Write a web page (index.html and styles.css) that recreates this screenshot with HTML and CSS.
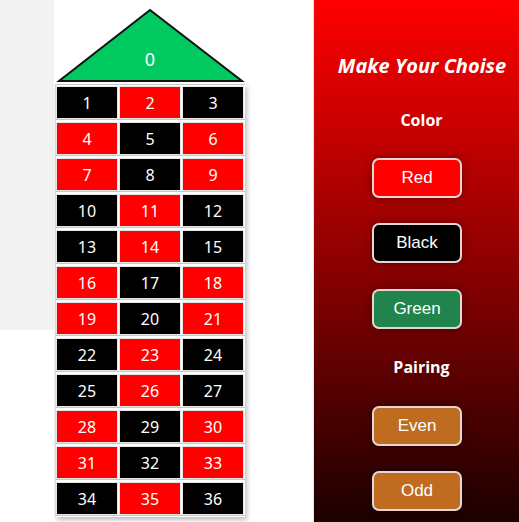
FILE: index.html
```html
<!DOCTYPE html>
<html>
<head>
<meta charset="utf-8">
<link rel="stylesheet" href="styles.css">
</head>
<body>
<div class="page">
  <div class="side"></div>
  <div class="board">
    <svg class="zero" width="190" height="74" viewBox="0 0 190 74">
      <polygon points="95,2 4,73 187,73" fill="#00c95f" stroke="#111" stroke-width="2" stroke-linejoin="miter"/>
      <text x="95" y="58" text-anchor="middle" class="zero-text">0</text>
    </svg>
    <div class="grid">
      <div class="row"><div class="cell b">1</div><div class="cell r">2</div><div class="cell b">3</div></div>
      <div class="row"><div class="cell r">4</div><div class="cell b">5</div><div class="cell r">6</div></div>
      <div class="row"><div class="cell r">7</div><div class="cell b">8</div><div class="cell r">9</div></div>
      <div class="row"><div class="cell b">10</div><div class="cell r">11</div><div class="cell b">12</div></div>
      <div class="row"><div class="cell b">13</div><div class="cell r">14</div><div class="cell b">15</div></div>
      <div class="row"><div class="cell r">16</div><div class="cell b">17</div><div class="cell r">18</div></div>
      <div class="row"><div class="cell r">19</div><div class="cell b">20</div><div class="cell r">21</div></div>
      <div class="row"><div class="cell b">22</div><div class="cell r">23</div><div class="cell b">24</div></div>
      <div class="row"><div class="cell b">25</div><div class="cell r">26</div><div class="cell b">27</div></div>
      <div class="row"><div class="cell r">28</div><div class="cell b">29</div><div class="cell r">30</div></div>
      <div class="row"><div class="cell r">31</div><div class="cell b">32</div><div class="cell r">33</div></div>
      <div class="row"><div class="cell b">34</div><div class="cell r">35</div><div class="cell b">36</div></div>
    </div>
  </div>
  <div class="panel">
    <h1 class="title">Make Your Choise</h1>
    <h2 class="label label-color">Color</h2>
    <button class="btn btn-red">Red</button>
    <button class="btn btn-black">Black</button>
    <button class="btn btn-green">Green</button>
    <h2 class="label label-pair">Pairing</h2>
    <button class="btn btn-orange">Even</button>
    <button class="btn btn-orange">Odd</button>
  </div>
</div>
</body>
</html>
```
FILE: styles.css
```css
html, body {
  margin: 0;
  padding: 0;
  background: #fff;
}
.page {
  display: flex;
  width: 519px;
  height: 522px;
  overflow: hidden;
  font-family: "Noto Sans", "Open Sans", sans-serif;
}
.side {
  width: 54px;
  height: 330px;
  background: #f2f2f2;
  flex: none;
}
.board {
  width: 259px;
  flex: none;
  padding-left: 1px;
  padding-top: 8px;
  box-sizing: border-box;
}
.zero {
  display: block;
}
.zero-text {
  fill: #fff;
  font-family: "Noto Sans", sans-serif;
  font-size: 18px;
}
.grid {
  width: 190px;
  margin-top: 2px;
  display: flex;
  flex-direction: column;
  gap: 2px;
  background: #fff;
  box-shadow: 2px 3px 5px rgba(0,0,0,0.25);
  border-top: 1px solid #c8c8c8;
  border-left: 1px solid #d8d8d8;
  box-sizing: border-box;
  padding: 1px 0 1px 0;
}
.row {
  display: flex;
  gap: 1px;
  border-bottom: 1px solid #c8c8c8;
}
.cell {
  width: 62px;
  height: 33px;
  box-sizing: border-box;
  border: 1px solid #e6e6e6;
  display: flex;
  align-items: center;
  justify-content: center;
  color: #fff;
  font-size: 16px;
}
.cell.b { background: #000; }
.cell.r { background: #ff0000; }
.panel {
  width: 206px;
  flex: none;
  height: 522px;
  background: linear-gradient(to bottom, #ff0000 0%, #1c0000 100%);
  border-left: 1px solid #e8e0e0;
  box-sizing: border-box;
  display: flex;
  flex-direction: column;
  align-items: center;
}
.title {
  margin: 52px 0 0 11px;
  font-family: "Open Sans", sans-serif;
  font-style: italic;
  font-weight: 700;
  font-size: 20px;
  line-height: 27px;
  color: #fff;
}
.label {
  margin: 0 0 0 10px;
  font-family: "Open Sans", sans-serif;
  font-weight: 700;
  font-size: 16px;
  line-height: 22px;
  color: #fff;
}
.label-color { margin-top: 30px; }
.label-pair { margin-top: 27px; }
.btn {
  width: 90px;
  height: 40px;
  border: 2px solid #e6d6d6;
  border-radius: 7px;
  color: #fff;
  font-family: "Liberation Sans", Arial, sans-serif;
  font-size: 17px;
  box-shadow: 0 0 10px rgba(0,0,0,0.35);
  padding: 0;
  margin-left: 1px;
}
.btn-red { background: #ff0000; margin-top: 27px; }
.btn-black { background: #000; margin-top: 25px; }
.btn-green { background: #20844c; margin-top: 26px; }
.label-pair + .btn { margin-top: 28px; }
.btn-orange { background: #c06c20; }
.btn-orange + .btn-orange { margin-top: 25px; }
```
